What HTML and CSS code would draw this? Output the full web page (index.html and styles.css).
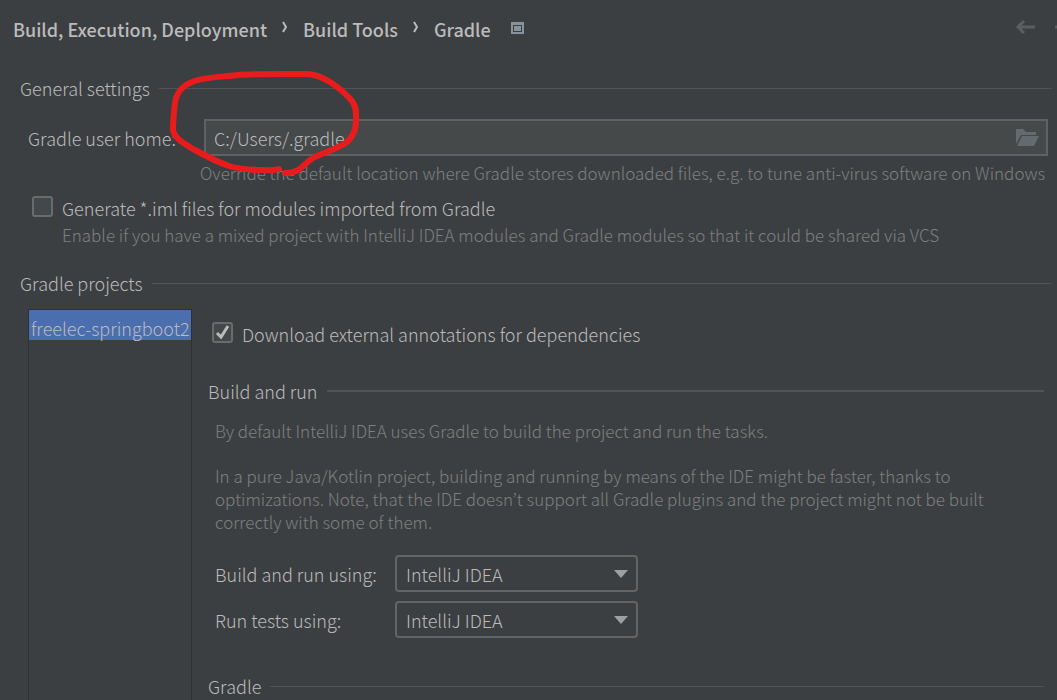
FILE: index.html
```
<!DOCTYPE html>
<html lang="en">

<head>
    <meta charset="UTF-8">
    <meta name="viewport" content="width=device-width, initial-scale=1.0">
    <title>Gradle</title>

    <link rel="stylesheet" href="styles.css">
</head>

<body>
    <header class="top-bar">
        <nav class="breadcrumbs">
            <a href="#">Build, Execution, Deployment</a>
            <svg class="chevron" width="6" height="16" viewBox="0 0 6 16"><path d="M1 1l3 5-3 5" /></svg>
            <a href="#">Build Tools</a>
            <svg class="chevron" width="6" height="16" viewBox="0 0 6 16"><path d="M1 1l3 5-3 5" /></svg>
            <a href="#">Gradle</a>
            <svg class="project-icon" width="13" height="14" viewBox="0 0 13 14">
                <path fill="#87939a" fill-rule="evenodd" d="M0 0h13v12H0zM2 3v7h9V3z" />
                <path fill="#87939a" d="M3 4h7v5H3z" />
            </svg>
        </nav>
        <div class="history">
            <button type="button" aria-label="Back">
                <svg width="20" height="18" viewBox="0 0 20 18"><path d="M20 7H3M9 1L3 7l6 6" /></svg>
            </button>
            <button type="button" aria-label="Forward">
                <svg width="20" height="18" viewBox="0 0 20 18"><path d="M0 7h17M11 1l6 6-6 6" /></svg>
            </button>
        </div>
    </header>

    <main class="settings">
        <h2 class="section-title">General settings</h2>
        <div class="home-row">
            <label for="home">Gradle user home:</label>
            <div class="path-field">
                <input id="home" type="text" value="C:/Users/.gradle">
                <button type="button" aria-label="Browse">
                    <svg width="23" height="17" viewBox="0 0 23 17">
                        <path d="M0 15V0h7l3 3h10v3H5z" />
                        <path d="M6 7h17l-5 10H1z" />
                    </svg>
                </button>
            </div>
        </div>
        <p class="hint home-hint">Override the default location where Gradle stores downloaded files, e.g. to tune anti-virus software on Windows</p>

        <div class="check-row iml-row">
            <input id="iml" type="checkbox">
            <label for="iml">Generate *.iml files for modules imported from Gradle</label>
        </div>
        <p class="hint iml-hint">Enable if you have a mixed project with IntelliJ IDEA modules and Gradle modules so that it could be shared via VCS</p>

        <h2 class="section-title">Gradle projects</h2>
        <div class="projects">
            <ul class="project-list">
                <li class="selected">freelec-springboot2</li>
            </ul>
            <div class="project-settings">
                <div class="check-row annotations-row">
                    <input id="annotations" type="checkbox" checked>
                    <label for="annotations">Download external annotations for dependencies</label>
                </div>

                <h3 class="section-title strong-line">Build and run</h3>
                <div class="build">
                    <p class="hint">By default IntelliJ IDEA uses Gradle to build the project and run the tasks.</p>
                    <p class="hint">In a pure Java/Kotlin project, building and running by means of the IDE might be faster, thanks to optimizations. Note, that the IDE doesn’t support all Gradle plugins and the project might not be built correctly with some of them.</p>
                    <div class="runners">
                        <label for="build-using">Build and run using:</label>
                        <div class="select">
                            <select id="build-using">
                                <option>IntelliJ IDEA</option>
                                <option>Gradle</option>
                            </select>
                        </div>
                        <label for="test-using">Run tests using:</label>
                        <div class="select">
                            <select id="test-using">
                                <option>IntelliJ IDEA</option>
                                <option>Gradle</option>
                            </select>
                        </div>
                    </div>
                </div>

                <h3 class="section-title">Gradle</h3>
            </div>
        </div>
    </main>

    <!-- hand-drawn mark around the path -->
    <svg class="marker" width="192" height="106" viewBox="168 70 192 106">
        <path d="M279 169C274 171 268 170 262 170C248 170 239 169 229 166C217 162 204 155 193 149C183 143 173 137 173 129C173 121 174 112 175 103C176 94 182 86 192 82C203 77 222 77 238 75C252 74 268 74 282 74H306C315 74 322 77 330 82C338 87 346 94 352 101C357 107 356 115 356 121C356 131 352 139 344 144C334 150 322 153 313 158C306 162 303 168 296 171C292 173 289 173 285 173" />
    </svg>
</body>

</html>
```
FILE: styles.css
```
* {
    box-sizing: border-box;
    margin: 0;
    padding: 0;
}

body {
    position: relative;
    display: flex;
    flex-direction: column;
    min-height: 100vh;
    background: #3c3f41;
    color: #bbbbbb;
    font-family: "Noto Sans CJK KR", "Noto Sans", sans-serif;
    font-size: 18px;
    font-weight: 300;
    line-height: 24px;
}

input,
select,
button {
    font: inherit;
    color: inherit;
    background: none;
    border: none;
    outline: none;
}

.top-bar {
    display: flex;
    justify-content: space-between;
    align-items: center;
    height: 57px;
    padding-left: 13px;
    overflow: hidden;
}

.breadcrumbs {
    display: flex;
    align-items: center;
    gap: 15px;
    font-weight: 500;
}

.breadcrumbs a {
    color: inherit;
    text-decoration: none;
}

.chevron {
    fill: none;
    stroke: #bbbbbb;
    stroke-width: 2;
}

.project-icon {
    margin-left: 5px;
}

.history {
    display: flex;
    gap: 20px;
    margin-right: -18px;
}

.history button {
    display: flex;
}

.history svg {
    fill: none;
    stroke: #5b5d5f;
    stroke-width: 3;
}

.settings {
    flex: 1;
    display: flex;
    flex-direction: column;
    padding: 19px 5px 0 20px;
}

.section-title {
    display: flex;
    align-items: center;
    gap: 9px;
    font-size: 18px;
    font-weight: 300;
}

.section-title::after {
    content: "";
    flex: 1;
    height: 1px;
    background: #515456;
}

.strong-line::after {
    height: 2px;
}

.home-row {
    display: grid;
    grid-template-columns: 176px 1fr;
    align-items: center;
    margin: 19px 4px 5px 8px;
}

.path-field {
    display: flex;
    align-items: center;
    height: 37px;
    padding: 0 7px 0 8px;
    background: #45494a;
    border: 2px solid #5f6263;
}

.path-field input {
    flex: 1;
    height: 33px;
}

.path-field button {
    display: flex;
}

.path-field svg {
    fill: #646b70;
}

.hint {
    color: #7d7f80;
    font-size: 17px;
    line-height: 23px;
}

.home-hint {
    margin-left: 180px;
    white-space: nowrap;
}

.check-row {
    display: flex;
    align-items: center;
    gap: 9px;
}

.check-row input {
    appearance: none;
    width: 21px;
    height: 21px;
    margin-bottom: 3px;
    background: #43494a;
    border: 2px solid #6b6b6b;
    border-radius: 3px;
}

.check-row input:checked {
    background: #43494a url("data:image/svg+xml,%3Csvg xmlns='http://www.w3.org/2000/svg' viewBox='0 0 17 17'%3E%3Cpath d='M3 9l4 4 7-11' fill='none' stroke='%23bbbbbb' stroke-width='3'/%3E%3C/svg%3E") center / 17px;
}

.iml-row {
    margin: 12px 0 3px 12px;
}

.iml-hint {
    margin: 0 0 25px 42px;
}

.projects {
    flex: 1;
    display: grid;
    grid-template-columns: 164px 1fr;
    gap: 16px;
    margin: 14px 8px 0 8px;
}

.project-list {
    border: 1px solid #2f3133;
    border-bottom: none;
    list-style: none;
    overflow: hidden;
}

.project-list li {
    height: 30px;
    padding: 6px 2px 0;
    white-space: nowrap;
}

.project-list .selected {
    background: #4b6eaf;
}

.annotations-row {
    margin: 13px 0 33px 4px;
}

.build {
    display: flex;
    flex-direction: column;
    gap: 22px;
    margin: 16px 0 36px 7px;
}

.runners {
    display: grid;
    grid-template-columns: 180px 243px;
    align-items: center;
    row-gap: 9px;
}

.select {
    position: relative;
}

.select::after {
    content: "";
    position: absolute;
    top: 15px;
    right: 10px;
    border: 7px solid transparent;
    border-top: 8px solid #9da0a2;
    border-bottom: none;
    pointer-events: none;
}

.select select {
    display: block;
    appearance: none;
    width: 100%;
    height: 37px;
    padding: 0 9px;
    border: 2px solid #646464;
    border-radius: 4px;
}

.marker {
    position: absolute;
    left: 168px;
    top: 70px;
    fill: none;
    stroke: #e81c1c;
    stroke-width: 6;
    stroke-linecap: round;
    pointer-events: none;
}
```
